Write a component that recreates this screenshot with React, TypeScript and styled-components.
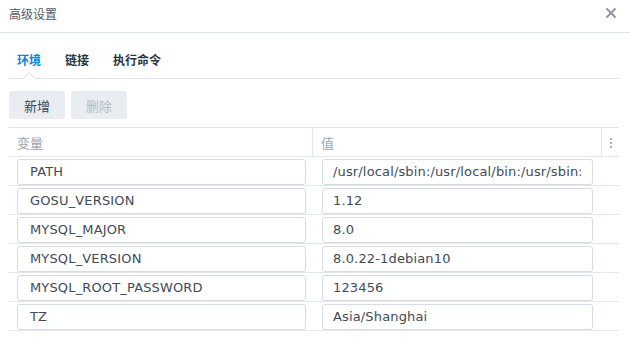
import React from "react";
import styled, { createGlobalStyle } from "styled-components";

const GlobalStyle = createGlobalStyle`
  html, body {
    margin: 0;
    padding: 0;
    background: #ffffff;
  }
  body {
    font-family: "DejaVu Sans", "Noto Sans CJK SC", sans-serif;
    color: #414b55;
  }
`;

const cjk = `"Noto Sans CJK SC", "DejaVu Sans", sans-serif`;

const Dialog = styled.div`
  width: 630px;
  height: 339px;
  display: flex;
  flex-direction: column;
  overflow: hidden;
`;

const TitleBar = styled.div`
  height: 33px;
  display: flex;
  align-items: center;
  justify-content: space-between;
  padding: 0 13px 0 9px;
  border-bottom: 1px solid #e1e6eb;
  box-sizing: border-box;
`;

const Title = styled.div`
  font-family: ${cjk};
  font-size: 12px;
  color: #505a64;
  margin-top: -6px;
`;

const CloseBtn = styled.div`
  width: 12px;
  height: 12px;
  margin-top: -6px;
  display: flex;
  cursor: pointer;
`;

const Body = styled.div`
  padding: 0 11px 0 9px;
  display: flex;
  flex-direction: column;
`;

const TabBar = styled.div`
  height: 46px;
  display: flex;
  gap: 24px;
  padding: 0 8px;
  border-bottom: 1px solid #dfe4ea;
  box-sizing: border-box;
`;

const Tab = styled.div<{ $active?: boolean }>`
  position: relative;
  display: flex;
  align-items: center;
  padding-top: 7px;
  font-family: ${cjk};
  font-size: 12px;
  font-weight: 600;
  color: ${(p) => (p.$active ? "#0086e5" : "#2c3640")};

  ${(p) =>
    p.$active &&
    `
    &::after {
      content: "";
      position: absolute;
      left: 50%;
      bottom: -6px;
      width: 9px;
      height: 9px;
      margin-left: -5px;
      background: #ffffff;
      border-top: 1px solid #dfe4ea;
      border-left: 1px solid #dfe4ea;
      transform: rotate(45deg);
    }
  `}
`;

const Toolbar = styled.div`
  display: flex;
  gap: 6px;
  padding: 12px 0 8px;
`;

const Button = styled.button<{ $disabled?: boolean }>`
  width: 56px;
  height: 28px;
  border: none;
  border-radius: 3px;
  background: #e9edf2;
  font-family: ${cjk};
  font-size: 13px;
  color: ${(p) => (p.$disabled ? "#b4bbc3" : "#3c4650")};
  cursor: ${(p) => (p.$disabled ? "default" : "pointer")};
  padding: 0;
`;

const Table = styled.div`
  border-top: 1px solid #dfe4ea;
  display: flex;
  flex-direction: column;
`;

const Row = styled.div`
  display: grid;
  grid-template-columns: 304px 289px 17px;
  height: 29px;
  border-bottom: 1px solid #e3e7ec;
  box-sizing: border-box;
`;

const HeadCell = styled.div<{ $last?: boolean }>`
  display: flex;
  align-items: center;
  justify-content: ${(p) => (p.$last ? "center" : "flex-start")};
  padding-left: ${(p) => (p.$last ? "0" : "8px")};
  padding-top: 1px;
  font-family: ${cjk};
  font-size: 13px;
  color: #9ba3ab;
  border-right: ${(p) => (p.$last ? "none" : "1px solid #e3e7ec")};
  box-sizing: border-box;
`;

const Cell = styled.div`
  display: flex;
  align-items: center;
  box-sizing: border-box;
`;

const KeyCell = styled(Cell)`
  padding: 0 7px 0 8px;
`;

const ValCell = styled(Cell)`
  padding: 0 9px 0 9px;
`;

const Field = styled.input<{ $inset: number }>`
  width: 100%;
  height: 26px;
  margin-top: 1px;
  box-sizing: border-box;
  border: 1px solid #d6dce3;
  border-radius: 3px;
  padding: 0 11px 0 ${(p) => p.$inset}px;
  font-family: "DejaVu Sans", sans-serif;
  font-size: 13px;
  letter-spacing: 0.15px;
  color: #414b55;
  background: #ffffff;
  outline: none;
`;

const Dots = styled.div`
  display: flex;
  flex-direction: column;
  gap: 2px;
  margin-left: 1px;

  span {
    width: 2px;
    height: 2px;
    background: #a9b0b8;
  }
`;

const vars: [string, string][] = [
  ["PATH", "/usr/local/sbin:/usr/local/bin:/usr/sbin:/usr/bin:/sbin:/bin"],
  ["GOSU_VERSION", "1.12"],
  ["MYSQL_MAJOR", "8.0"],
  ["MYSQL_VERSION", "8.0.22-1debian10"],
  ["MYSQL_ROOT_PASSWORD", "123456"],
  ["TZ", "Asia/Shanghai"],
];

export default function App() {
  return (
    <>
      <GlobalStyle />
      <Dialog>
        <TitleBar>
          <Title>高级设置</Title>
          <CloseBtn>
            <svg width="12" height="12" viewBox="0 0 12 12">
              <path d="M1.5 1.5 L10.5 10.5 M10.5 1.5 L1.5 10.5" stroke="#8e959d" strokeWidth="2" />
            </svg>
          </CloseBtn>
        </TitleBar>
        <Body>
          <TabBar>
            <Tab $active>环境</Tab>
            <Tab>链接</Tab>
            <Tab>执行命令</Tab>
          </TabBar>
          <Toolbar>
            <Button>新增</Button>
            <Button $disabled disabled>
              删除
            </Button>
          </Toolbar>
          <Table>
            <Row>
              <HeadCell>变量</HeadCell>
              <HeadCell>值</HeadCell>
              <HeadCell $last>
                <Dots>
                  <span />
                  <span />
                  <span />
                </Dots>
              </HeadCell>
            </Row>
            {vars.map(([k, v]) => (
              <Row key={k}>
                <KeyCell>
                  <Field $inset={12} defaultValue={k} />
                </KeyCell>
                <ValCell>
                  <Field $inset={10} defaultValue={v} />
                </ValCell>
                <Cell />
              </Row>
            ))}
          </Table>
        </Body>
      </Dialog>
    </>
  );
}
